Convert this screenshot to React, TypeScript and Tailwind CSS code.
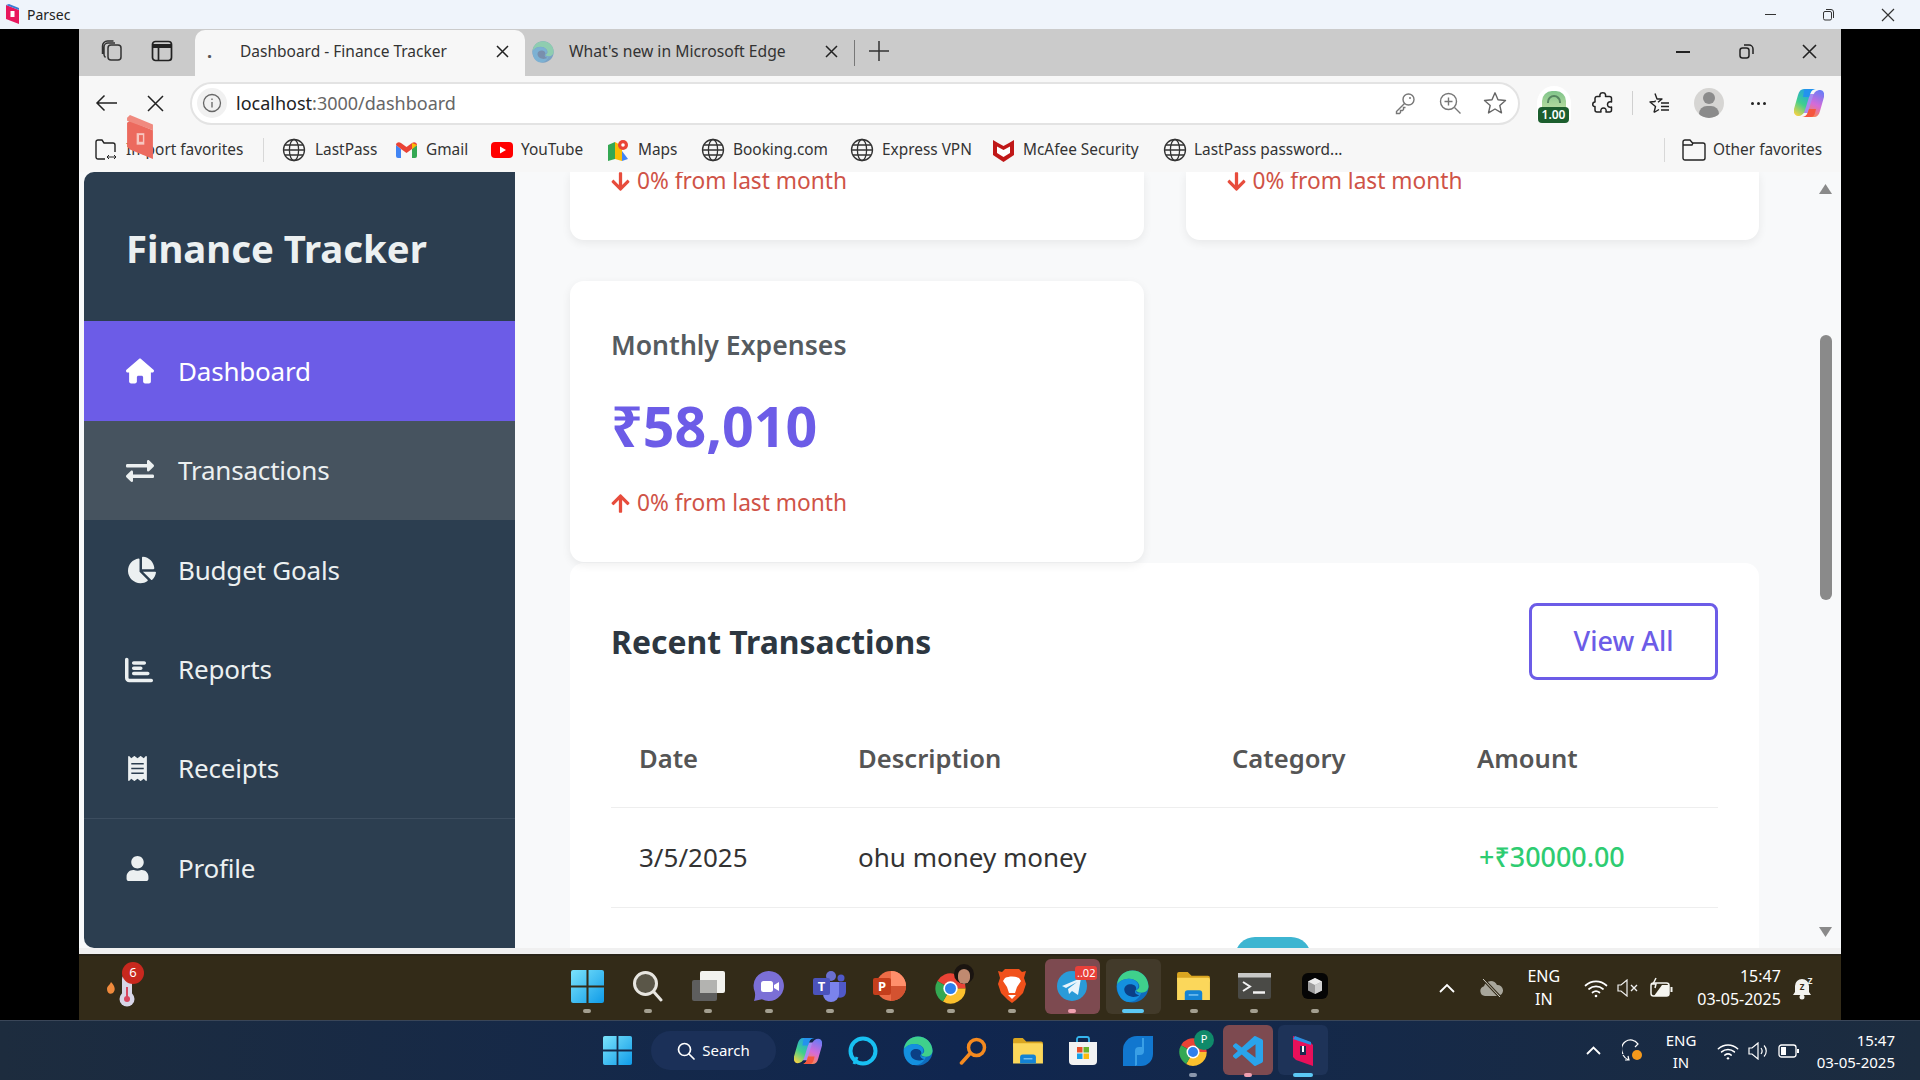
import React from "react";
import { FaExchangeAlt, FaChartPie, FaReceipt, FaUser, FaArrowDown, FaArrowUp } from "react-icons/fa";
import { FaHouse, FaChartBar } from "react-icons/fa6";

const Globe = () => (
  <svg width="24" height="24" viewBox="0 0 24 24" fill="none" stroke="#333" strokeWidth="1.3" className="shrink-0">
    <circle cx="12" cy="12" r="10.5" />
    <ellipse cx="12" cy="12" rx="4.6" ry="10.5" />
    <path d="M1.5 12h21M3 7h18M3 17h18" />
  </svg>
);

const Win = ({ s }: { s: number }) => (
  <svg width={s} height={s} viewBox="0 0 32 32">
    <defs>
      <linearGradient id="wg" x1="0" y1="0" x2="1" y2="1">
        <stop offset="0" stopColor="#7be3fb" />
        <stop offset="1" stopColor="#0f9be8" />
      </linearGradient>
    </defs>
    <path d="M2 0h13v15H0V2a2 2 0 0 1 2-2zM17 0h13a2 2 0 0 1 2 2v13H17zM0 17h15v15H2a2 2 0 0 1-2-2zM17 17h15v13a2 2 0 0 1-2 2H17z" fill="url(#wg)" />
  </svg>
);

const Edge = ({ s, dim }: { s: number; dim?: boolean }) => (
  <svg width={s} height={s} viewBox="0 0 32 32" className={dim ? "opacity-60" : ""}>
    <circle cx="16" cy="16" r="15.5" fill="#0f6cbd" />
    <path d="M1 14C2 6 8 .5 16 .5c8 0 15 6 15.5 15 .2 4-3 6.5-7 6.5-3 0-5-1-5-2.5 4-1 4-5 1-8-4-4-12-4-17 0C2 13 1.5 13.5 1 14z" fill="#3fd08c" />
    <path d="M1 14c4-5 11-7 17-4 4 2 5 7 1.5 9.5-1 3 2 3.500 5 2.500-2 5-6 9-12 9C6 31 .5 24 1 14z" fill="#1490df" />
    <path d="M8 19c0-4 4-6 8-5 3 .8 4 3 3.500 5-2 2-1 5 3 5.500-4 3-14 2-14.500-5.500z" fill="#0b3f86" />
  </svg>
);

const Chrome = ({ s }: { s: number }) => (
  <svg width={s} height={s} viewBox="0 0 24 24">
    <path d="M12 12 2.470 6.500A11 11 0 0 1 23 12Z" fill="#ea4335" />
    <path d="M12 12H23A11 11 0 0 1 6.500 21.530Z" fill="#fbc02d" />
    <path d="M12 12 6.500 21.530A11 11 0 0 1 2.470 6.500Z" fill="#34a853" />
    <circle cx="12" cy="12" r="5.200" fill="#fff" />
    <circle cx="12" cy="12" r="4" fill="#2f80ed" />
  </svg>
);

const Folder = ({ s }: { s: number }) => (
  <svg width={s} height={s * 0.88} viewBox="0 0 34 30">
    <path d="M0 3a2 2 0 0 1 2-2h9l4 4h17a2 2 0 0 1 2 2v4H0z" fill="#d9a520" />
    <path d="M0 7h32a2 2 0 0 1 2 2v21H0z" fill="#fbd75b" />
    <path d="M8 30v-7a3 3 0 0 1 3-3h12a3 3 0 0 1 3 3v7z" fill="#1483d4" />
    <rect x="12" y="24" width="10" height="1.500" fill="#7cc4f2" />
  </svg>
);

const Copilot = ({ s }: { s: number }) => (
  <svg width={s} height={s} viewBox="0 0 30 30">
    <defs>
      <linearGradient id="cpa" x1="0.7" y1="0" x2="0.1" y2="1">
        <stop offset="0" stopColor="#1f9bf0" />
        <stop offset="0.550" stopColor="#3fcf8e" />
        <stop offset="1" stopColor="#ffd23f" />
      </linearGradient>
      <linearGradient id="cpb" x1="0.7" y1="0" x2="0.3" y2="1">
        <stop offset="0" stopColor="#6d7cf6" />
        <stop offset="0.500" stopColor="#d56bd8" />
        <stop offset="1" stopColor="#ff8a3d" />
      </linearGradient>
    </defs>
    <path d="M10 6h13l-4 19H7z" fill="#a88cf0" />
    <path d="M10 1h12c-3 0-5 1.500-6 5L11 22c-1 4-4 6-7 6-3 0-5-3-4-7L4 7c1-4 3-6 6-6z" fill="url(#cpa)" />
    <path d="M20 29H8c3 0 5-1.500 6-5l5-16c1-4 4-6 7-6 3 0 5 3 4 7l-4 14c-1 4-3 6-6 6z" fill="url(#cpb)" />
    <path d="M17 29H8c3 0 5-1.500 6-5l1-3h7c-1 5-2 8-5 8z" fill="#f5563f" />
    <path d="M11 1h11c-3 0-5 1.500-6 5l-1 3H9c1-4 1-8 2-8z" fill="#2492ee" />
  </svg>
);

const Dot = ({ c }: { c: string }) => <span className={`absolute bottom-[7px] left-1/2 h-[4px] w-[8px] -translate-x-1/2 rounded-full ${c}`} />;

const Slot = ({ children, dot = true }: { children: React.ReactNode; dot?: boolean }) => (
  <div className="relative flex h-full w-[60.67px] shrink-0 items-center justify-center pb-[4px]">
    {children}
    {dot && <Dot c="bg-[#a39f90]" />}
  </div>
);

const OSlot = ({ children }: { children: React.ReactNode }) => (
  <div className="relative flex h-full w-[55px] shrink-0 items-center justify-center">{children}</div>
);

const Wifi = ({ s, c = "#fff" }: { s: number; c?: string }) => (
  <svg width={s} height={s} viewBox="0 0 24 24" fill="none" stroke={c} strokeWidth="1.700" strokeLinecap="round">
    <path d="M1.500 9.500c6-5.500 15-5.500 21 0M5 13c4-3.500 10-3.500 14 0M8.500 16.500c2-1.500 5-1.500 7 0" />
    <circle cx="12" cy="20" r="1.300" fill={c} stroke="none" />
  </svg>
);

const Metric = ({ title, value, up }: { title: string; value: string; up: boolean }) => (
  <div className="relative z-10 h-[281px] rounded-[14px] bg-white pl-[41px] pt-[46px] shadow-[0_3px_10px_rgba(0,0,0,0.07)]">
    <h3 className="text-[26.600px] font-semibold leading-[36px] text-[#555b60]">{title}</h3>
    <div className="mt-[28px] text-[55.500px] font-bold leading-[70px] text-[#6c5ce7]">{value}</div>
    <div className="mt-[24px] flex items-center gap-[6px] text-[22.700px] leading-[36px] text-[#cf5347]">
      {up ? <FaArrowUp className="-ml-[1px] text-[21px] text-[#e74c3c]" /> : <FaArrowDown className="-ml-[1px] text-[21px] text-[#e74c3c]" />}
      <span>0% from last month</span>
    </div>
  </div>
);

const Clipped = () => (
  <div className="h-[68px] overflow-hidden rounded-b-[14px] bg-white pl-[41px] shadow-[0_3px_10px_rgba(0,0,0,0.07)]">
    <div className="flex h-[18px] items-center gap-[6px] text-[22.700px] leading-[18px] text-[#cf5347]">
      <FaArrowDown className="-ml-[1px] text-[21px] text-[#e74c3c]" />
      <span>0% from last month</span>
    </div>
  </div>
);

const NavItem = ({ icon, label, cls }: { icon: React.ReactNode; label: string; cls: string }) => (
  <div className={`flex shrink-0 items-center pl-[41px] text-[26px] tracking-[-0.2px] text-[#ecf0f1] ${cls}`}>
    <span className="flex w-[53px] items-center">{icon}</span>
    <span>{label}</span>
  </div>
);

export default function App() {
  return (
    <div className="relative flex h-[1080px] w-[1920px] flex-col overflow-hidden bg-black font-['Noto_Sans',sans-serif] text-[#222]">
      {/* Parsec title bar */}
      <div className="flex h-[29px] shrink-0 items-center bg-[#eff4fb] pl-[5px]">
        <svg width="15" height="21" viewBox="0 0 15 21" className="shrink-0">
          <path d="M1 1l13 5v14L1 15z" fill="#e8175d" />
          <path d="M1 1l3-1 10 4v2z" fill="#3a7bd5" />
          <rect x="5.500" y="7" width="4" height="6" fill="#fff" />
        </svg>
        <span className="ml-[7px] text-[14px] text-[#222]">Parsec</span>
        <div className="ml-auto flex items-center">
          <span className="h-[1px] w-[11px] bg-[#333]" />
          <svg width="13" height="13" viewBox="0 0 13 13" fill="none" stroke="#333" className="ml-[46px]">
            <rect x="1.500" y="3.500" width="8" height="8.500" rx="1.500" />
            <path d="M4 1.500h5a2.500 2.500 0 0 1 2.500 2.500v6" />
          </svg>
          <svg width="14" height="14" viewBox="0 0 14 14" stroke="#333" strokeWidth="1.200" className="ml-[46px] mr-[25px]">
            <path d="M1 1l12 12M13 1L1 13" />
          </svg>
        </div>
      </div>

      {/* Remote window */}
      <div className="flex min-h-0 flex-1 pl-[79px]">
        <div className="relative flex w-[1762px] flex-col bg-[#f7f7f7]">
          {/* Parsec floating icon over the favorites bar */}
          <svg width="26" height="44" viewBox="0 0 27 46" className="absolute left-[48px] top-[86px] z-20">
            <path d="M0 8 3 6l24 10v30L3 36 0 33z" fill="#ec6a5e" />
            <path d="M0 3 3 0l24 10v6L0 6z" fill="#f08a7f" />
            <rect x="10" y="19" width="8" height="12" fill="#f7c7c0" />
            <rect x="12.500" y="21" width="4" height="7" fill="#ec6a5e" />
          </svg>

          {/* Tab strip */}
          <div className="flex h-[47px] shrink-0 items-end bg-[#cbcbcb]">
            <div className="flex h-full w-[116px] items-center pl-[21px] pb-[4px]">
              <svg width="24" height="24" viewBox="0 0 24 24" fill="none" stroke="#333" strokeWidth="1.500">
                <rect x="8" y="6" width="13" height="15" rx="3" />
                <path d="M5.500 18.500c-1-1-1.500-2-1.500-3V8a4 4 0 0 1 4-4h7M2.500 15V7a5 5 0 0 1 5-5h6" />
              </svg>
              <svg width="22" height="22" viewBox="0 0 22 22" fill="none" stroke="#222" strokeWidth="1.700" className="ml-[27px]">
                <rect x="1.500" y="1.500" width="19" height="19" rx="3" />
                <path d="M1.500 6h19" strokeWidth="4" />
                <path d="M7.500 6v14" />
              </svg>
            </div>
            <div className="flex h-[46px] w-[330px] items-center rounded-t-[10px] bg-[#f7f7f7] pb-[3px] pl-[12px]">
              <span className="w-[33px] text-[18px] font-bold text-[#555]">.</span>
              <span className="w-[256px] text-[15.500px] text-[#333]">Dashboard - Finance Tracker</span>
              <svg width="13" height="13" viewBox="0 0 13 13" stroke="#222" strokeWidth="1.500">
                <path d="M1 1l11 11M12 1L1 12" />
              </svg>
            </div>
            <div className="flex h-[46px] w-[329px] items-center pb-[3px] pl-[7px]">
              <span className="opacity-70"><Edge s={22} dim /></span>
              <span className="ml-[15px] w-[256px] text-[15.700px] text-[#333]">What&apos;s new in Microsoft Edge</span>
              <svg width="13" height="13" viewBox="0 0 13 13" stroke="#222" strokeWidth="1.500">
                <path d="M1 1l11 11M12 1L1 12" />
              </svg>
            </div>
            <span className="mb-[10px] h-[26px] w-[1px] bg-[#777]" />
            <svg width="22" height="22" viewBox="0 0 22 22" stroke="#333" strokeWidth="1.500" className="mb-[14px] ml-[13px]">
              <path d="M11 1v20M1 11h20" />
            </svg>
            <div className="ml-auto flex h-full items-center pb-[2px] pr-[24px]">
              <span className="h-[2px] w-[14px] bg-[#222]" />
              <svg width="15" height="15" viewBox="0 0 15 15" fill="none" stroke="#222" strokeWidth="1.500" className="ml-[49px]">
                <rect x="1" y="4" width="9" height="10" rx="2.500" />
                <path d="M5 1h5a4 4 0 0 1 4 4v5" />
              </svg>
              <svg width="15" height="15" viewBox="0 0 15 15" stroke="#222" strokeWidth="1.600" className="ml-[48px]">
                <path d="M1 1l13 13M14 1L1 14" />
              </svg>
            </div>
          </div>

          {/* Toolbar */}
          <div className="flex h-[52px] shrink-0 items-center bg-[#f7f7f7] pt-[2px]">
            <div className="flex w-[111px] items-center pl-[16px]">
              <svg width="23" height="18" viewBox="0 0 23 18" fill="none" stroke="#222" strokeWidth="1.500">
                <path d="M22 9H2M9.500 1.500 2 9l7.500 7.500" />
              </svg>
              <svg width="17" height="17" viewBox="0 0 17 17" stroke="#222" strokeWidth="1.500" className="ml-[29px]">
                <path d="M1 1l15 15M16 1L1 16" />
              </svg>
            </div>
            <div className="flex h-[43px] w-[1330px] shrink-0 items-center rounded-full border-2 border-[#e3e3e3] bg-white pl-[5px] pr-[11px]">
              <span className="flex h-[30px] w-[30px] items-center justify-center rounded-full bg-[#f1f1f1]">
                <svg width="20" height="20" viewBox="0 0 20 20" fill="none" stroke="#666" strokeWidth="1.300">
                  <circle cx="10" cy="10" r="8.500" />
                  <path d="M10 9v5.500M10 5.500v1.500" />
                </svg>
              </span>
              <span className="ml-[9px] text-[18px] text-[#222]">localhost<span className="text-[#666]">:3000/dashboard</span></span>
              <div className="ml-auto flex items-center gap-[21px]">
                <svg width="24" height="24" viewBox="0 0 24 24" fill="none" stroke="#777" strokeWidth="1.400">
                  <circle cx="15.500" cy="8.500" r="5.500" />
                  <path d="M11.500 12.500 3.500 20.500v2h3l1-1v-2h2l1-1v-2h2" />
                  <circle cx="17" cy="7" r="1" fill="#777" stroke="none" />
                </svg>
                <svg width="24" height="24" viewBox="0 0 24 24" fill="none" stroke="#777" strokeWidth="1.400">
                  <circle cx="10.500" cy="10.500" r="8" />
                  <path d="M16.500 16.500l6 6M10.500 6.500v8M6.500 10.500h8" />
                </svg>
                <svg width="24" height="24" viewBox="0 0 24 24" fill="none" stroke="#666" strokeWidth="1.400" strokeLinejoin="round">
                  <path d="M12 1.800l3 7 7.500.7-5.700 5 1.700 7.400-6.500-3.900-6.500 3.900 1.700-7.400-5.700-5 7.500-.7z" />
                </svg>
              </div>
            </div>
            <div className="relative ml-[17px] flex h-[34px] w-[34px] shrink-0 justify-center rounded-t-full bg-white">
              <span className="mt-[5px] flex h-[18px] w-[24px] justify-center rounded-t-[10px] bg-gradient-to-b from-[#7fc48a] to-[#b7dca0] pt-[4px]">
                <span className="h-[8px] w-[14px] rounded-t-full border-2 border-b-0 border-[#55845f]" />
              </span>
              <span className="absolute bottom-[-3px] left-[1px] flex h-[16px] w-[31px] items-center justify-center rounded-[4px] bg-[#1c5e2e] text-[12px] font-semibold leading-none text-white">1.00</span>
            </div>
            <svg width="24" height="24" viewBox="0 0 24 24" fill="none" stroke="#222" strokeWidth="1.500" strokeLinejoin="round" className="ml-[20px] shrink-0">
              <path d="M9 3.500c.5-2.500 5-2.500 5.500 0 .2 1 0 1.500 0 2h4a2 2 0 0 1 2 2v3.500c-3-.8-4 1-4 2.500s1 3.300 4 2.500v3a2 2 0 0 1-2 2h-3.500c.8-3-1-4-2.500-4s-3.300 1-2.500 4H6a2 2 0 0 1-2-2v-3.500C1 16 1 11 4 11V7.500a2 2 0 0 1 2-2h3c0-.5-.2-1 0-2z" />
            </svg>
            <span className="ml-[17px] h-[24px] w-[1px] shrink-0 bg-[#d0d0d0]" />
            <svg width="24" height="24" viewBox="0 0 24 24" fill="none" stroke="#222" strokeWidth="1.400" strokeLinejoin="round" className="ml-[13px] shrink-0">
              <path d="M9 2.500 11 8h5l-4 3.200M8 21.500l1.500-6L4 11l5-.5.500-1M8 21.500l5-3" />
              <path d="M15 12h8M15 15.500h8M15 19h8" />
            </svg>
            <div className="relative ml-[24px] h-[30px] w-[30px] shrink-0 overflow-hidden rounded-full bg-[#d6d5d3]">
              <span className="absolute left-[9px] top-[4px] h-[12px] w-[12px] rounded-full bg-[#8b8b8b]" />
              <span className="absolute left-[5px] top-[18px] h-[16px] w-[20px] rounded-full bg-[#8b8b8b]" />
            </div>
            <div className="ml-[27px] flex shrink-0 gap-[3px]">
              <span className="h-[3px] w-[3px] rounded-full bg-[#222]" />
              <span className="h-[3px] w-[3px] rounded-full bg-[#222]" />
              <span className="h-[3px] w-[3px] rounded-full bg-[#222]" />
            </div>
            <span className="ml-[28px] shrink-0"><Copilot s={30} /></span>
          </div>

          {/* Favorites */}
          <div className="flex h-[44px] shrink-0 items-center bg-[#f7f7f7] text-[15.400px] text-[#333]">
            <div className="flex w-[184px] shrink-0 items-center pl-[16px]">
              <svg width="22" height="22" viewBox="0 0 22 22" fill="none" stroke="#222" strokeWidth="1.400">
                <path d="M10 20H3a2 2 0 0 1-2-2V3a2 2 0 0 1 2-2h4l2 3h9a2 2 0 0 1 2 2v7" />
                <path d="M12 18h9M14 16l-2 2 2 2M19 16l2 2-2 2" strokeWidth="1" />
              </svg>
              <span className="ml-[9px] whitespace-nowrap">Import favorites</span>
            </div>
            <span className="h-[24px] w-[1px] shrink-0 bg-[#d8d8d8]" />
            <div className="ml-[18px] flex w-[114px] shrink-0 items-center gap-[9px]"><Globe /><span>LastPass</span></div>
            <div className="flex w-[95px] shrink-0 items-center gap-[9px]">
              <svg width="21" height="16" viewBox="0 0 21 16" className="shrink-0">
                <path d="M0 3v11a2 2 0 0 0 2 2h3V7z" fill="#4285f4" />
                <path d="M21 3v11a2 2 0 0 1-2 2h-3V7z" fill="#34a853" />
                <path d="M0 3c0-2.500 3-3.500 5-2l5.500 4 5.500-4c2-1.500 5-.5 5 2l-5 4-5.500 4L5 7z" fill="#ea4335" />
                <path d="M16 1l5 2-5 4z" fill="#fbbc04" />
              </svg>
              <span>Gmail</span>
            </div>
            <div className="flex w-[116px] shrink-0 items-center gap-[8px]">
              <svg width="22" height="16" viewBox="0 0 22 16" className="shrink-0">
                <rect width="22" height="16" rx="4" fill="#f00" />
                <path d="M9 4.500v7l6-3.500z" fill="#fff" />
              </svg>
              <span>YouTube</span>
            </div>
            <div className="flex w-[94px] shrink-0 items-center gap-[9px]">
              <svg width="22" height="22" viewBox="0 0 22 22" className="shrink-0">
                <path d="M1 6l7-3v17l-7 2z" fill="#34a853" />
                <path d="M8 3l7 4v15l-7-2z" fill="#fbbc04" />
                <path d="M15 12l6 8-6 2z" fill="#4285f4" />
                <circle cx="16" cy="6" r="5" fill="#ea4335" />
                <circle cx="16" cy="6" r="1.800" fill="#fff" />
              </svg>
              <span>Maps</span>
            </div>
            <div className="flex w-[149px] shrink-0 items-center gap-[8px]"><Globe /><span>Booking.com</span></div>
            <div className="flex w-[143px] shrink-0 items-center gap-[8px]"><Globe /><span>Express VPN</span></div>
            <div className="flex w-[170px] shrink-0 items-center gap-[9px]">
              <svg width="21" height="24" viewBox="0 0 21 24" className="shrink-0">
                <path d="M0 2l5 3 5.500 3L16 5l5-3v15l-10.500 7L0 17z" fill="#c01818" />
                <path d="M4 8.500l6.500 3.500L17 8.500v6.500l-6.500 4L4 15z" fill="#fff" />
              </svg>
              <span>McAfee Security</span>
            </div>
            <div className="flex w-[300px] shrink-0 items-center gap-[7px]"><Globe /><span>LastPass password...</span></div>
            <span className="ml-[201px] h-[24px] w-[1px] shrink-0 bg-[#d8d8d8]" />
            <svg width="24" height="22" viewBox="0 0 24 22" fill="none" stroke="#222" strokeWidth="1.400" className="ml-[17px] shrink-0">
              <path d="M3 1h5l2.500 3H21a2 2 0 0 1 2 2v13a2 2 0 0 1-2 2H3a2 2 0 0 1-2-2V3a2 2 0 0 1 2-2z" />
              <path d="M1 6h9l1-2" />
            </svg>
            <span className="ml-[7px] whitespace-nowrap">Other favorites</span>
          </div>

          {/* Web content */}
          <div className="flex h-[776px] shrink-0 bg-[#f8f9fa] pl-[5px] pr-[6px]">
            <aside className="flex w-[431px] shrink-0 flex-col rounded-l-[10px] bg-[#2c3e50]">
              <div className="flex h-[149px] shrink-0 items-center pl-[42px] pt-[4px] text-[38.300px] font-bold text-[#ecf0f1]">Finance Tracker</div>
              <NavItem cls="h-[100px] bg-[#6c5ce7] text-white" icon={<FaHouse className="ml-[1px] text-[28px] text-white" />} label="Dashboard" />
              <NavItem cls="h-[99px] bg-[#46535f]" icon={<FaExchangeAlt className="ml-[1px] text-[28px]" />} label="Transactions" />
              <NavItem cls="h-[100px]" icon={<FaChartPie className="ml-[3px] text-[28px]" />} label="Budget Goals" />
              <NavItem cls="h-[99px]" icon={<FaChartBar className="text-[28px]" />} label="Reports" />
              <NavItem cls="h-[99px]" icon={<FaReceipt className="text-[25px]" />} label="Receipts" />
              <NavItem cls="h-[100px] border-t border-[#3c4d5f]" icon={<FaUser className="text-[25px]" />} label="Profile" />
            </aside>

            <main className="flex min-w-0 flex-1 flex-col overflow-hidden pl-[55px] pr-[57px]">
              <div className="grid shrink-0 grid-cols-2 gap-[42px]">
                <Clipped />
                <Clipped />
              </div>
              <div className="mt-[41px] grid shrink-0 grid-cols-2 gap-[42px]">
                <Metric title="Monthly Expenses" value="₹58,010" up />
              </div>
              <section className="mt-[1px] flex-1 overflow-hidden rounded-t-[14px] bg-white px-[41px] pt-[40px]">
                <div className="flex items-center justify-between">
                  <h2 className="text-[31.900px] font-bold leading-[44px] text-[#2d3741]">Recent Transactions</h2>
                  <button className="flex h-[77px] w-[189px] items-center justify-center rounded-[8px] border-[3px] border-[#6c5ce7] text-[27px] font-medium text-[#6c5ce7]">View All</button>
                </div>
                <div className="mt-[33px] grid h-[95px] grid-cols-[219px_374px_245px_1fr] items-center border-b border-[#eeeeee] pb-[2px] pl-[28px] text-[25.600px] font-semibold text-[#555]">
                  <span>Date</span>
                  <span>Description</span>
                  <span>Category</span>
                  <span>Amount</span>
                </div>
                <div className="grid h-[100px] grid-cols-[219px_374px_245px_1fr] items-center border-b border-[#eeeeee] pl-[28px] text-[26px] text-[#333]">
                  <span>3/5/2025</span>
                  <span>ohu money money</span>
                  <span />
                  <span className="ml-[2px] text-[26.900px] font-medium text-[#2ecc71]">+₹30000.00</span>
                </div>
                <div className="grid grid-cols-[219px_374px_245px_1fr] pl-[28px] pt-[29px]">
                  <span />
                  <span />
                  <span className="ml-[3px] h-[40px] w-[76px] rounded-full bg-[#3db5d1]" />
                </div>
              </section>
            </main>

            <div className="flex w-[19px] shrink-0 flex-col items-center bg-[#f8f9fa]">
              <svg width="13" height="10" viewBox="0 0 13 10" className="mt-[12px] shrink-0"><path d="M6.500 0 13 10H0z" fill="#8a8a8a" /></svg>
              <span className="mt-[141px] h-[265px] w-[12px] shrink-0 rounded-full bg-[#8a8a8a]" />
              <svg width="13" height="10" viewBox="0 0 13 10" className="mt-[327px] shrink-0"><path d="M0 0h13L6.500 10z" fill="#8a8a8a" /></svg>
            </div>
          </div>

          <div className="h-[6px] shrink-0 bg-[#f0f0f0]" />

          {/* Remote taskbar */}
          <div className="flex min-h-0 flex-1 items-center border-t-2 border-[#2a2418] bg-[#332b18] text-white">
            <div className="relative h-full w-[477.700px] shrink-0">
              <svg width="36" height="38" viewBox="0 0 36 38" className="absolute left-[26px] top-[13px]">
                <path d="M6 13c4 4 5 8 2 11-3 2-6 0-6-4 0-3 3-4 4-7z" fill="#f08a3c" />
                <rect x="17" y="5" width="10" height="26" rx="5" fill="#d8d6e8" />
                <circle cx="22" cy="30" r="7.500" fill="#d8d6e8" />
                <circle cx="22" cy="30" r="3" fill="#d9455f" />
                <rect x="21" y="18" width="2" height="10" fill="#d9455f" />
              </svg>
              <span className="absolute left-[43px] top-[6px] flex h-[22px] w-[22px] items-center justify-center rounded-full bg-[#c8281e] text-[13px] text-white">6</span>
            </div>
            <Slot><Win s={33} /></Slot>
            <Slot>
              <svg width="32" height="32" viewBox="0 0 32 32" fill="#5a5648" stroke="#e8e6e0" strokeWidth="3" strokeLinecap="round">
                <circle cx="13.500" cy="13.500" r="11" />
                <path d="M21.500 21.500 29 30" fill="none" />
              </svg>
            </Slot>
            <Slot>
              <svg width="33" height="30" viewBox="0 0 33 30">
                <rect x="0" y="9" width="25" height="21" rx="2" fill="#5e5e5e" />
                <rect x="8" y="0" width="25" height="22" rx="2" fill="#f2f2ee" />
                <rect x="8" y="9" width="17" height="13" fill="#b3b3b0" />
              </svg>
            </Slot>
            <Slot>
              <svg width="32" height="32" viewBox="0 0 32 32">
                <path d="M16 1a15 15 0 1 1-7 28.300L1 31c1-3 1.500-6 .8-9A15 15 0 0 1 16 1z" fill="#7b6fd6" />
                <rect x="8" y="11" width="12" height="11" rx="2.500" fill="#fff" />
                <path d="M21 15l5-3v9l-5-3z" fill="#fff" />
              </svg>
            </Slot>
            <Slot>
              <svg width="34" height="32" viewBox="0 0 34 32">
                <circle cx="18" cy="6" r="5" fill="#6a6fd0" />
                <circle cx="28" cy="8" r="3.500" fill="#5059c9" />
                <path d="M24 12h9v10a6 6 0 0 1-9 5z" fill="#5059c9" />
                <path d="M10 12h16v12a8 8 0 0 1-16 0z" fill="#7b83eb" />
                <rect x="0" y="8" width="17" height="17" rx="2" fill="#4b53bc" />
                <text x="8.500" y="21" textAnchor="middle" fontSize="13" fontWeight="700" fill="#fff" fontFamily="Noto Sans">T</text>
              </svg>
            </Slot>
            <Slot>
              <svg width="34" height="32" viewBox="0 0 34 32">
                <circle cx="18" cy="16" r="15" fill="#ed6c47" />
                <path d="M18 1a15 15 0 0 1 15 15H18z" fill="#ff8f6b" />
                <path d="M18 16h15a15 15 0 0 1-15 15z" fill="#d35230" />
                <rect x="0" y="8" width="18" height="17" rx="2" fill="#c43e1c" />
                <text x="9" y="21" textAnchor="middle" fontSize="13" fontWeight="700" fill="#fff" fontFamily="Noto Sans">P</text>
              </svg>
            </Slot>
            <Slot>
              <span className="relative mt-[4px] flex"><Chrome s={33} />
                <span className="absolute -top-[8px] left-[20px] h-[20px] w-[20px] overflow-hidden rounded-full bg-[#1a1410]">
                  <span className="absolute left-[4px] top-[5px] h-[15px] w-[12px] rounded-full bg-[#c08a70]" />
                </span>
              </span>
            </Slot>
            <Slot>
              <svg width="28" height="34" viewBox="0 0 28 34">
                <path d="M7 0h14l3 3 4-1-2 7 2 6-3 9-7 7-4 3-4-3-7-7-3-9 2-6-2-7 4 1z" fill="#f1511b" />
                <path d="M7 9c4-2 10-2 14 0l2 3-4 6-2 6h-6l-2-6-4-6z" fill="#fff" />
                <path d="M10 26h8l-4 4z" fill="#fff" />
              </svg>
            </Slot>
            <div className="relative flex h-full w-[60.67px] shrink-0 items-center justify-center pb-[4px]">
              <span className="absolute left-[3px] top-[3px] h-[55px] w-[55px] rounded-[6px] bg-[#7d4a50]" />
              <svg width="30" height="30" viewBox="0 0 30 30" className="relative">
                <circle cx="15" cy="15" r="15" fill="#2a9bd8" />
                <path d="M5 15l19-8-3 17-6-4-3 3-1-5 9-7-11 6z" fill="#e8f4fb" />
              </svg>
              <span className="absolute left-[33px] top-[10px] rounded-[3px] bg-[#e8403a] px-[2px] text-[11px] leading-[14px] text-white">..02</span>
              <Dot c="bg-[#f0a0b0]" />
            </div>
            <div className="relative flex h-full w-[60.67px] shrink-0 items-center justify-center pb-[4px]">
              <span className="absolute left-[3px] top-[3px] h-[55px] w-[55px] rounded-[6px] bg-[#423a2a]" />
              <span className="relative"><Edge s={33} /></span>
              <span className="absolute bottom-[7px] left-1/2 h-[4px] w-[22px] -translate-x-1/2 rounded-full bg-[#5cc8f5]" />
            </div>
            <Slot><Folder s={33} /></Slot>
            <Slot>
              <svg width="33" height="26" viewBox="0 0 33 26">
                <rect width="33" height="26" rx="2" fill="#4a4a46" />
                <rect width="33" height="4.500" fill="#c8c8c6" />
                <path d="M5 9l7 4.500L5 18" fill="none" stroke="#f2f2f2" strokeWidth="2" />
                <path d="M15 19.500h12" stroke="#f2f2f2" strokeWidth="2.500" />
              </svg>
            </Slot>
            <Slot>
              <svg width="26" height="26" viewBox="0 0 26 26">
                <rect width="26" height="26" rx="6" fill="#050505" />
                <path d="M13 5l7 3.500v9L13 21l-7-3.500v-9z" fill="#9c9c9c" />
                <path d="M13 5l7 3.500-7 3.500-7-3.500z" fill="#ededed" />
                <path d="M13 12l7-3.500v9L13 21z" fill="#d0d0d0" />
              </svg>
            </Slot>

            <div className="ml-[80.600px] flex w-[42px] shrink-0 justify-center">
              <svg width="16" height="10" viewBox="0 0 16 10" fill="none" stroke="#fff" strokeWidth="1.800"><path d="M1 9l7-7 7 7" /></svg>
            </div>
            <div className="flex w-[46px] shrink-0 justify-center">
              <svg width="24" height="20" viewBox="0 0 24 20">
                <path d="M6 18a5 5 0 0 1-1-9.800A7 7 0 0 1 18 7a5.500 5.500 0 0 1 1 11z" fill="#a8a69b" />
                <path d="M4 1l17 18" stroke="#332b18" strokeWidth="3" />
                <path d="M4 1l17 18" stroke="#d0cec4" strokeWidth="1" />
              </svg>
            </div>
            <div className="w-[60px] shrink-0 text-center text-[16px] leading-[23px]">ENG<br />IN</div>
            <div className="flex w-[44px] shrink-0 justify-center"><Wifi s={24} /></div>
            <div className="flex w-[20px] shrink-0 justify-center">
              <svg width="22" height="18" viewBox="0 0 22 18" fill="none" stroke="#f0f0f0" strokeWidth="1.200" className="shrink-0">
                <path d="M1 6v6h3l6 5V1L4 6z" />
                <path d="M14 6l6 6M20 6l-6 6" strokeWidth="1.400" />
              </svg>
            </div>
            <div className="flex w-[48px] shrink-0 justify-center">
              <svg width="23" height="22" viewBox="0 0 23 22" fill="none" stroke="#f5f5f0" strokeWidth="1.500">
                <rect x="1" y="6" width="18" height="13" rx="2.500" />
                <path d="M4 19l8-11h7v11z" fill="#f5f5f0" stroke="none" />
                <rect x="20.500" y="10" width="2" height="5" fill="#f5f5f0" stroke="none" />
                <path d="M6 1l-3 6h3l-1 4" />
              </svg>
            </div>
            <div className="w-[95px] shrink-0 text-right text-[16px] leading-[23px]">15:47<br />03-05-2025</div>
            <div className="flex w-[44px] shrink-0 justify-center">
              <svg width="22" height="24" viewBox="0 0 22 24">
                <path d="M10 3a7 7 0 0 1 7 7v6l2 3H1l2-3v-6a7 7 0 0 1 7-7z" fill="#f2f2ee" />
                <circle cx="10" cy="21" r="2.500" fill="#f2f2ee" />
                <text x="10" y="14" textAnchor="middle" fontSize="8" fontWeight="700" fill="#332b18" fontFamily="Noto Sans">Z</text>
                <text x="18" y="8" textAnchor="middle" fontSize="8" fontWeight="700" fill="#f2f2ee" fontFamily="Noto Sans">Z</text>
              </svg>
            </div>
          </div>
        </div>
      </div>

      {/* Local taskbar */}
      <div className="flex h-[60px] shrink-0 items-center border-t border-[#3a4658] bg-gradient-to-r from-[#1d2c3e] via-[#10264f] to-[#1c2c3f] text-white">
        <div className="ml-[595px] flex w-[44px] shrink-0 justify-center"><Win s={29} /></div>
        <div className="ml-[12px] flex h-[39px] w-[125px] shrink-0 items-center justify-center gap-[7px] rounded-full bg-[#1b3058] text-[15px]">
          <svg width="18" height="18" viewBox="0 0 18 18" fill="none" stroke="#fff" strokeWidth="1.700" strokeLinecap="round">
            <circle cx="7.500" cy="7.500" r="6" />
            <path d="M12 12l5 5" />
          </svg>
          <span>Search</span>
        </div>
        <div className="ml-[4.500px] flex h-full shrink-0">
          <OSlot><Copilot s={28} /></OSlot>
          <OSlot>
            <svg width="30" height="30" viewBox="0 0 30 30" fill="none" stroke="#18c0f2" strokeWidth="4">
              <circle cx="15" cy="15" r="12.500" />
              <path d="M6 28l3-7" strokeWidth="3" />
            </svg>
          </OSlot>
          <OSlot><Edge s={30} /></OSlot>
          <OSlot>
            <svg width="28" height="28" viewBox="0 0 28 28" fill="none" stroke="#f58a1f" strokeWidth="3.500" strokeLinecap="round">
              <circle cx="17.500" cy="10.500" r="8" />
              <path d="M11 16.500 2.500 26" />
            </svg>
          </OSlot>
          <OSlot><Folder s={30} /></OSlot>
          <OSlot>
            <svg width="30" height="30" viewBox="0 0 30 30">
              <path d="M9 6V3a2 2 0 0 1 2-2h8a2 2 0 0 1 2 2v3" fill="none" stroke="#35b5ee" strokeWidth="1.800" />
              <path d="M1 6h28v19a4 4 0 0 1-4 4H5a4 4 0 0 1-4-4z" fill="#f2f2f2" />
              <rect x="9" y="11" width="5.500" height="5.500" fill="#e8502a" />
              <rect x="15.500" y="11" width="5.500" height="5.500" fill="#6ab42d" />
              <rect x="9" y="17.500" width="5.500" height="5.500" fill="#15a0e8" />
              <rect x="15.500" y="17.500" width="5.500" height="5.500" fill="#fbbb12" />
            </svg>
          </OSlot>
          <OSlot>
            <svg width="30" height="30" viewBox="0 0 30 30">
              <path d="M30 0v18a12 12 0 0 1-12 12H0V14A14 14 0 0 1 14 0z" fill="#1177cf" />
              <path d="M21 2v13a4 4 0 0 1-4 4h-3v10l-2 1V15a4 4 0 0 1 4-4h3V2z" fill="#4ab0ef" opacity="0.700" />
            </svg>
          </OSlot>
          <OSlot>
            <span className="relative mt-[2px] flex"><Chrome s={30} />
              <span className="absolute -top-[7px] left-[16px] flex h-[20px] w-[20px] items-center justify-center rounded-full bg-[#0f8a6a] text-[11px] text-white">P</span>
            </span>
            <span className="absolute bottom-[3px] left-1/2 h-[4px] w-[8px] -translate-x-1/2 rounded-full bg-[#8a97ad]" />
          </OSlot>
          <OSlot>
            <span className="absolute left-[2.500px] top-[4px] h-[50px] w-[50px] rounded-[6px] bg-[#7d4a50]" />
            <svg width="30" height="30" viewBox="0 0 24 24" className="relative">
              <path d="M23.150 2.587 18.210.21a1.494 1.494 0 0 0-1.705.29l-9.460 8.630-4.120-3.128a.999.999 0 0 0-1.276.057L.327 7.261A1 1 0 0 0 .326 8.740L3.899 12 .326 15.260a1 1 0 0 0 .001 1.479L1.650 17.940a.999.999 0 0 0 1.276.057l4.120-3.128 9.460 8.630a1.492 1.492 0 0 0 1.704.29l4.942-2.377A1.500 1.500 0 0 0 24 20.060V3.939a1.500 1.500 0 0 0-.850-1.352zm-5.146 14.861L10.826 12l7.178-5.448v10.896z" fill="#2aa4ec" />
            </svg>
            <span className="absolute bottom-[3px] left-1/2 h-[4px] w-[8px] -translate-x-1/2 rounded-full bg-[#f0a0b0]" />
          </OSlot>
          <OSlot>
            <span className="absolute left-[2.500px] top-[4px] h-[50px] w-[50px] rounded-[6px] bg-[#1e3358]" />
            <svg width="20" height="30" viewBox="0 0 20 30" className="relative">
              <path d="M0 0l17 6 3 3v21L3 24 0 21z" fill="#e8105a" />
              <path d="M2 0l16 6v3L0 3z" fill="#2a8fe0" />
              <rect x="7" y="10" width="6" height="9" fill="#1a2c50" />
              <rect x="9" y="10" width="2" height="6" fill="#fff" />
            </svg>
            <span className="absolute bottom-[3px] left-1/2 h-[4px] w-[20px] -translate-x-1/2 rounded-full bg-[#5cc8f5]" />
          </OSlot>
        </div>
        <div className="ml-[240.500px] flex w-[44px] shrink-0 justify-center">
          <svg width="15" height="9" viewBox="0 0 15 9" fill="none" stroke="#fff" strokeWidth="1.800"><path d="M1 8l6.500-6.500L14 8" /></svg>
        </div>
        <div className="flex w-[36px] shrink-0 justify-center">
          <svg width="22" height="24" viewBox="0 0 22 24" fill="none" stroke="#fff" strokeWidth="1.200">
            <path d="M1 15a9 9 0 0 1 15-10M13 2l3 3-3 3M1 16c1 2 3 4 6 5M3 21l4 0-1-4" />
            <circle cx="15" cy="16" r="5" fill="#f59a1c" stroke="none" />
          </svg>
        </div>
        <div className="w-[60px] shrink-0 text-center text-[15px] leading-[22px]">ENG<br />IN</div>
        <div className="flex w-[34px] shrink-0 justify-center"><Wifi s={22} /></div>
        <div className="flex w-[26px] shrink-0 justify-center">
          <svg width="21" height="18" viewBox="0 0 21 18" fill="none" stroke="#fff" strokeWidth="1.200">
            <path d="M1 6v6h3l6 5V1L4 6z" />
            <path d="M13 6c1.500 2 1.500 4 0 6M16 3.500c3 3 3 8 0 11" />
          </svg>
        </div>
        <div className="flex w-[34px] shrink-0 justify-center">
          <svg width="21" height="14" viewBox="0 0 21 14" fill="none" stroke="#fff" strokeWidth="1.300">
            <rect x="1" y="1" width="17" height="12" rx="2.500" />
            <rect x="3" y="3" width="5" height="8" fill="#fff" stroke="none" />
            <rect x="19" y="5" width="2" height="4" fill="#fff" stroke="none" />
          </svg>
        </div>
        <div className="w-[90px] shrink-0 whitespace-nowrap text-right text-[15px] leading-[22px]">15:47<br />03-05-2025</div>
      </div>
    </div>
  );
}
